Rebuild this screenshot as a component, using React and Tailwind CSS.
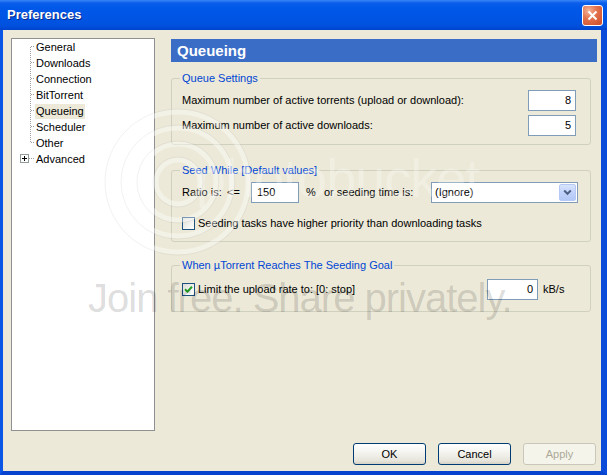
import React from "react";

const items = ["General", "Downloads", "Connection", "BitTorrent", "Queueing", "Scheduler", "Other", "Advanced"];

function TreeGutter({ index }) {
  const last = index === items.length - 1;
  if (last) {
    return (
      <svg width="23" height="16" className="shrink-0" shapeRendering="crispEdges">
        <rect x="8.5" y="3.5" width="8" height="8" fill="white" stroke="#919B9C" />
        <path d="M10 7.5 H15 M12.5 5 V10" stroke="#000" />
        <path d="M17 7.5 H23" stroke="#A0A0A0" strokeDasharray="1 1" />
      </svg>
    );
  }
  const y1 = index === 0 ? 8 : 0;
  const y2 = index === items.length - 2 ? 8 : 16;
  return (
    <svg width="23" height="16" className="shrink-0" shapeRendering="crispEdges">
      <path d={`M18.5 ${y1} V${y2}`} stroke="#A0A0A0" strokeDasharray="1 1" />
      <path d="M19 7.5 H23" stroke="#A0A0A0" strokeDasharray="1 1" />
    </svg>
  );
}

function Checkbox({ checked }) {
  return (
    <span className="w-[13px] h-[13px] shrink-0 border border-[#1C5180] bg-[linear-gradient(135deg,#DCDCD7_0%,#F2F2F0_60%,#FFFFFF_100%)] flex items-center justify-center">
      {checked && (
        <svg width="9" height="9" viewBox="0 0 9 9">
          <path d="M1 4.2 L3.4 6.6 L8 1.8" fill="none" stroke="#21A121" strokeWidth="2" />
        </svg>
      )}
    </span>
  );
}

function NumBox({ value, className, align = "right" }) {
  return (
    <div
      className={`h-[21px] shrink-0 border border-[#7F9DB9] bg-white flex items-center ${
        align === "right" ? "justify-end pr-[4px]" : "justify-start pl-[5px]"
      } ${className}`}
    >
      {value}
    </div>
  );
}

function Btn({ children, disabled }) {
  return (
    <div
      className={`w-[73px] h-[22px] rounded-[3px] border flex items-center justify-center ${
        disabled
          ? "border-[#C9C7BA] bg-[#F5F4EA] text-[#ACA899]"
          : "border-[#003C74] bg-[linear-gradient(to_bottom,#FFFFFF_0%,#F4F4F0_40%,#E6E4DA_85%,#D6D0C5_100%)] text-black"
      }`}
    >
      {children}
    </div>
  );
}

export default function App() {
  return (
    <div className="relative w-[607px] h-[475px] overflow-hidden font-['Liberation_Sans',Arial,sans-serif] text-[11px] leading-[13px] text-black">
      {/* Title bar */}
      <div className="h-[30px] flex items-center pl-[7px] pr-[4px] bg-[linear-gradient(to_bottom,#3B86F7_0px,#0A5EEB_3px,#0058E8_8px,#0054E3_20px,#0050DC_26px,#0043CE_30px)]">
        <span className="flex-1 text-white font-bold text-[13px] leading-[16px] [text-shadow:1px_1px_0_#0A2A8A]">
          Preferences
        </span>
        <div className="w-[21px] h-[21px] rounded-[3px] border border-white bg-[radial-gradient(circle_at_30%_25%,#F4B49A_0%,#E4744F_40%,#CC4A26_100%)] flex items-center justify-center">
          <svg width="11" height="11" viewBox="0 0 11 11">
            <path d="M1.5 1.5 L9.5 9.5 M9.5 1.5 L1.5 9.5" stroke="white" strokeWidth="2" />
          </svg>
        </div>
      </div>

      {/* Body */}
      <div className="h-[445px] flex flex-col bg-[#ECE9D8] border-l-[3px] border-l-[#0B56E4] border-r-[6px] border-r-[#0A4BD9] border-b-[4px] border-b-[#0843D0]">
        <div className="flex pl-[8px] pt-[8px] h-[401px]">
          {/* Tree */}
          <div className="w-[144px] h-[393px] shrink-0 bg-white border border-[#8E9092] flex flex-col">
            {items.map((it, i) => (
              <div key={it} className="h-[16px] flex items-center">
                <TreeGutter index={i} />
                <span
                  className={`px-[1px] h-[15px] leading-[15px] ${
                    it === "Queueing" ? "bg-[#ECE9D8]" : ""
                  }`}
                >
                  {it}
                </span>
              </div>
            ))}
          </div>

          {/* Right panel */}
          <div className="ml-[16px] w-[426px] flex flex-col pt-[1px]">
            <div className="h-[23px] bg-[#3A6DC6] text-white font-bold text-[15px] leading-[23px] pl-[6px] pb-[1px]">
              Queueing
            </div>

            <fieldset className="w-[420px] mt-[9px] border border-[#D0D0BF] rounded-[3px] p-0 m-0">
              <legend className="ml-[8px] px-[2px] text-[#0046D5] leading-[14px]">Queue Settings</legend>
              <div className="pl-[10px] pr-[14px] pt-[5px] pb-[8px] flex flex-col gap-[4px]">
                <div className="h-[21px] flex items-center">
                  <span className="flex-1">Maximum number of active torrents (upload or download):</span>
                  <NumBox value="8" className="w-[48px]" />
                </div>
                <div className="h-[21px] flex items-center">
                  <span className="flex-1">Maximum number of active downloads:</span>
                  <NumBox value="5" className="w-[48px]" />
                </div>
              </div>
            </fieldset>

            <fieldset className="w-[420px] mt-[18px] border border-[#D0D0BF] rounded-[3px] p-0 m-0">
              <legend className="ml-[8px] px-[2px] text-[#0046D5] leading-[14px]">Seed While [Default values]</legend>
              <div className="pl-[10px] pr-[10px] pt-[5px] pb-[11px] flex flex-col">
                <div className="h-[21px] flex items-center">
                  <span className="w-[42px] shrink-0">Ratio is:</span>
                  <span className="w-[27px] shrink-0 pl-[3px]">&lt;=</span>
                  <NumBox value="150" align="left" className="w-[48px]" />
                  <span className="ml-[7px] w-[18px] shrink-0">%</span>
                  <span className="w-[107px] shrink-0">or seeding time is:</span>
                  <div className="w-[147px] h-[21px] shrink-0 border border-[#7F9DB9] bg-white flex items-center pl-[3px] pr-[1px]">
                    <span className="flex-1">(Ignore)</span>
                    <span className="w-[17px] h-[17px] rounded-[2px] border border-[#B5C8F7] bg-[linear-gradient(to_bottom,#D9E5FD_0%,#C1D3FB_50%,#B4C8F6_100%)] flex items-center justify-center">
                      <svg width="9" height="7" viewBox="0 0 9 7">
                        <path d="M1.2 1.5 L4.5 4.8 L7.8 1.5" fill="none" stroke="#4D6185" strokeWidth="2" />
                      </svg>
                    </span>
                  </div>
                </div>
                <div className="h-[13px] mt-[14px] flex items-center gap-[3px]">
                  <Checkbox />
                  <span>Seeding tasks have higher priority than downloading tasks</span>
                </div>
              </div>
            </fieldset>

            <fieldset className="w-[420px] mt-[16px] border border-[#D0D0BF] rounded-[3px] p-0 m-0">
              <legend className="ml-[8px] px-[2px] text-[#0046D5] leading-[14px]">When µTorrent Reaches The Seeding Goal</legend>
              <div className="pl-[10px] pr-0 pt-[7px] pb-[11px]">
                <div className="h-[21px] flex items-center">
                  <Checkbox checked />
                  <span className="ml-[3px] flex-1">Limit the upload rate to: [0: stop]</span>
                  <NumBox value="0" className="w-[51px]" />
                  <span className="ml-[5px] w-[47px] shrink-0">kB/s</span>
                </div>
              </div>
            </fieldset>
          </div>
        </div>

        {/* Buttons */}
        <div className="mt-[12px] h-[22px] flex justify-end gap-[12px] pr-[5px]">
          <Btn>OK</Btn>
          <Btn>Cancel</Btn>
          <Btn disabled>Apply</Btn>
        </div>
      </div>

      {/* Photobucket watermark overlay */}
      <div className="pointer-events-none absolute inset-0">
        <svg className="absolute left-0 top-0" width="607" height="475">
          <g fill="none" stroke="#FFFFFF" strokeOpacity="0.4" strokeWidth="5">
            <circle cx="178" cy="182" r="22" />
            <circle cx="178" cy="182" r="38" />
            <circle cx="178" cy="182" r="54" />
            <circle cx="178" cy="182" r="70" />
          </g>
          <g fill="none" stroke="#9A9A9A" strokeOpacity="0.14" strokeWidth="1">
            <circle cx="178" cy="182" r="25" />
            <circle cx="178" cy="182" r="41" />
            <circle cx="178" cy="182" r="57" />
            <circle cx="178" cy="182" r="73" />
          </g>
        </svg>
        <div className="absolute left-[196px] top-[148px] text-[54px] leading-[60px] tracking-[-1px] text-white/25">
          photobucket
        </div>
        <div className="absolute left-[88px] top-[274px] text-[40px] leading-[48px] tracking-[-1px] text-black/15">
          Join free. Share privately.
        </div>
      </div>
    </div>
  );
}
